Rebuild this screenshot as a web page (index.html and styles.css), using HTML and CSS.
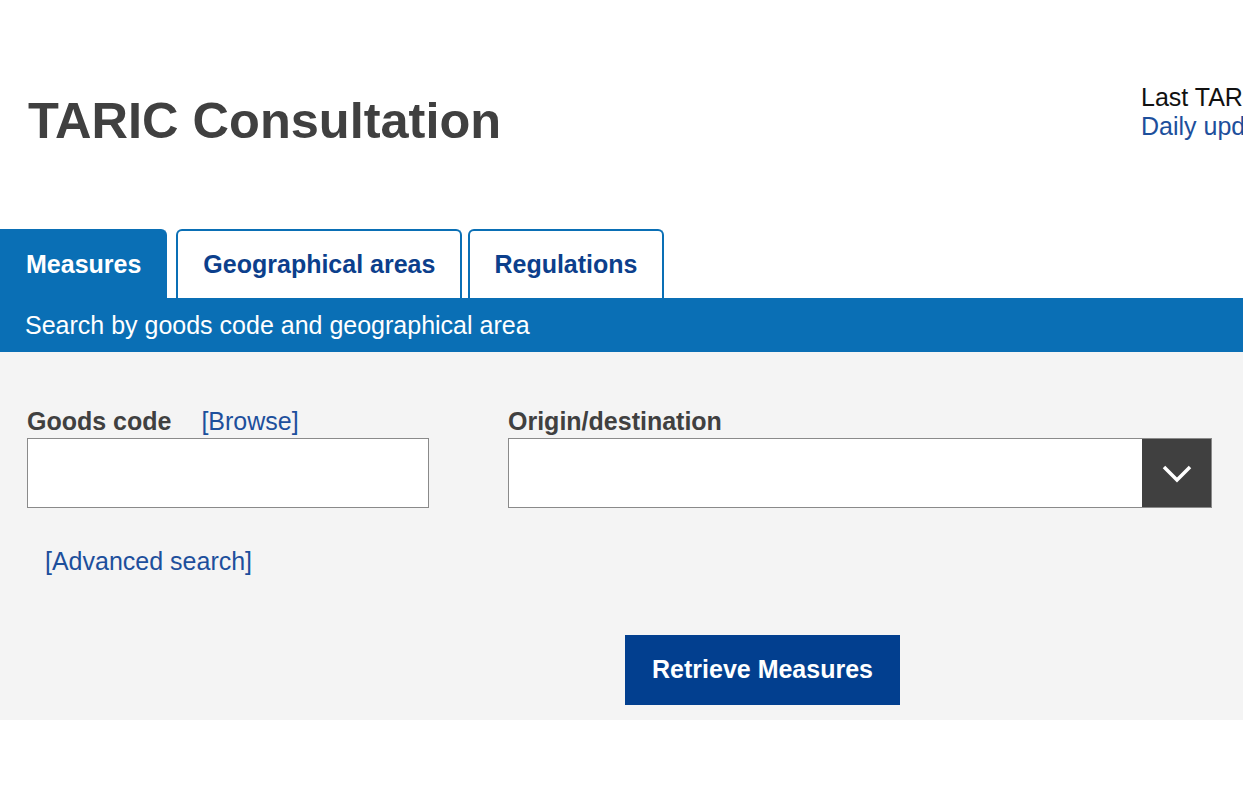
FILE: index.html
```html
<!DOCTYPE html>
<html lang="en">
<head>
<meta charset="utf-8">
<title>TARIC Consultation</title>
<link rel="stylesheet" href="styles.css">
</head>
<body>
<header class="header">
  <h1 class="title">TARIC Consultation</h1>
  <div class="info">
    <div class="info-line">Last TARIC update: 15-04-2024</div>
    <a class="info-link" href="#">Daily updates</a>
  </div>
</header>

<nav class="tabs">
  <a class="tab tab-active" href="#">Measures</a>
  <a class="tab tab-geo" href="#">Geographical areas</a>
  <a class="tab tab-reg" href="#">Regulations</a>
</nav>

<div class="subbar">Search by goods code and geographical area</div>

<section class="panel">
  <div class="fields">
    <div class="field field-goods">
      <div class="label-row">
        <span class="label">Goods code</span>
        <a class="link browse" href="#">[Browse]</a>
      </div>
      <input class="text-input" type="text">
    </div>
    <div class="field field-origin">
      <div class="label-row">
        <span class="label">Origin/destination</span>
      </div>
      <div class="select">
        <div class="select-box"></div>
        <div class="select-btn">
          <svg width="30" height="18" viewBox="0 0 30 18"><path d="M2 2 L15 15 L28 2" fill="none" stroke="#fff" stroke-width="3.5"/></svg>
        </div>
      </div>
    </div>
  </div>
  <div class="advanced"><a class="link" href="#">[Advanced search]</a></div>
  <div class="actions">
    <button class="btn" type="button">Retrieve Measures</button>
  </div>
</section>
</body>
</html>
```

FILE: styles.css
```css
html, body {
  margin: 0;
  padding: 0;
  overflow: hidden;
  background: #fff;
}
body {
  font-family: "Liberation Sans", Arial, sans-serif;
  font-size: 25px;
  color: #404040;
  width: 1243px;
}
a { text-decoration: none; }

.header {
  display: flex;
  align-items: flex-start;
  padding-top: 83px;
}
.title {
  margin: 8px 0 0 0;
  padding-left: 28px;
  width: 1141px;
  flex: none;
  font-size: 50.5px;
  line-height: 60px;
  font-weight: bold;
  color: #404040;
  box-sizing: border-box;
}
.info {
  flex: none;
  white-space: nowrap;
  line-height: 1.15;
}
.info-line { color: #111; }
.info-link { color: #1d4f9c; display: block; }

.tabs {
  display: flex;
  margin-top: 78px;
  height: 69px;
  align-items: stretch;
}
.tab {
  display: flex;
  align-items: center;
  padding: 0 24px;
  border: 2px solid #0a6fb5;
  border-bottom: none;
  border-radius: 6px 6px 0 0;
  background: #fff;
  color: #0c3f8c;
  font-weight: bold;
  font-size: 25px;
  line-height: 1;
}
.tab-active {
  background: #0a6fb5;
  color: #fff;
  border-radius: 0 6px 0 0;
}
.tab-geo { margin-left: 9px; padding: 0 25px; }
.tab-reg { margin-left: 6px; }

.subbar {
  background: #0a6fb5;
  color: #fff;
  padding: 13px 25px 12px;
  line-height: 1.15;
  font-size: 25px;
}

.panel {
  background: #f4f4f4;
  padding: 54px 0 15px 27px;
}
.fields {
  display: flex;
  gap: 79px;
}
.field-goods { width: 402px; }
.field-origin { width: 704px; }
.label-row {
  line-height: 30px;
  margin-bottom: 2px;
  white-space: nowrap;
}
.label {
  font-weight: bold;
  color: #404040;
}
.browse { margin-left: 23px; }
.link { color: #1d4f9c; }

.text-input {
  display: block;
  width: 402px;
  height: 70px;
  box-sizing: border-box;
  border: 1px solid #8a8a8a;
  background: #fff;
  margin: 0;
  padding: 0 10px;
  font: inherit;
}

.select {
  display: flex;
  height: 70px;
  border: 1px solid #8a8a8a;
  box-sizing: border-box;
}
.select-box {
  flex: 1;
  background: #fff;
}
.select-btn {
  width: 69px;
  background: #404040;
  display: flex;
  align-items: center;
  justify-content: center;
}
.select-btn svg { display: block; margin-top: 2px; }

.advanced {
  margin-top: 38px;
  padding-left: 18px;
  line-height: 30px;
}

.actions {
  margin-top: 59px;
  padding-left: 598px;
}
.btn {
  display: block;
  width: 275px;
  height: 70px;
  border: none;
  margin: 0;
  background: #023f8f;
  color: #fff;
  font-family: "Liberation Sans", Arial, sans-serif;
  font-size: 25px;
  font-weight: bold;
  cursor: pointer;
}
```
